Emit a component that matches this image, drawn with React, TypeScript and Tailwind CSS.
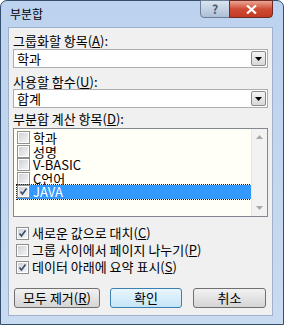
import React from 'react';

const Check = ({ checked }: { checked?: boolean }) => (
  <span className="flex h-[13px] w-[13px] shrink-0 items-center justify-center border border-[#8e8f8f] bg-white">
    <span className="relative flex h-[9px] w-[9px] items-center justify-center bg-gradient-to-br from-[#cfd2d6] to-[#f4f4f4]">
      {checked && (
        <svg width="9" height="9" viewBox="0 0 9 9" className="absolute">
          <path d="M1.5 4.5 L3.5 7 L7.5 1.5" fill="none" stroke="#3a4a6a" strokeWidth="1.6" />
        </svg>
      )}
    </span>
  </span>
);

const Combo = ({ value }: { value: string }) => (
  <div className="flex h-[19px] items-center border border-[#abadb3] bg-white pl-[3px] pr-[1px]">
    <span className="flex-1 leading-[14px]">{value}</span>
    <span className="flex h-[15px] w-[15px] items-center justify-center rounded-[2px] border border-[#8a8a8a] bg-gradient-to-b from-[#f4f4f4] to-[#d8d8d8]">
      <svg width="7" height="4" viewBox="0 0 7 4">
        <path d="M0 0 H7 L3.5 4 Z" fill="#000" />
      </svg>
    </span>
  </div>
);

const Btn = ({ children, primary, w }: { children: React.ReactNode; primary?: boolean; w: string }) => (
  <button
    className={
      primary
        ? 'flex h-[20px] items-center justify-center rounded-[3px] border border-[#3c7fb1] bg-gradient-to-b from-[#eaf6fd] to-[#c4e5f6] leading-[14px] ' + w
        : 'flex h-[20px] items-center justify-center rounded-[3px] border border-[#707070] bg-gradient-to-b from-[#f2f2f2] to-[#d5d5d5] leading-[14px] ' + w
    }
  >
    {children}
  </button>
);

export default function App() {
  const items = ['학과', '성명', 'V-BASIC', 'C언어', 'JAVA'];
  return (
    <div className="flex h-[325px] w-[284px] flex-col rounded-t-[7px] border border-[#34506e] bg-gradient-to-b from-[#bcd2ee] to-[#c9dbf1] pb-[8px] pl-[7px] pr-[10px] font-['Noto_Sans_CJK_KR',sans-serif] text-[13px] text-black">
      <div className="flex h-[26px] items-start justify-between">
        <span className="ml-[2px] mt-[6px] text-[12px] leading-[14px]">부분합</span>
        <div className="-mt-px flex">
          <span className="flex h-[18px] w-[30px] items-center justify-center rounded-bl-[4px] border border-[#6d7f98] bg-gradient-to-b from-[#d9e4f1] to-[#aebfd6] text-[12px] font-bold leading-none text-[#4a5a70]">
            ?
          </span>
          <span className="-ml-px flex h-[18px] w-[44px] items-center justify-center rounded-br-[4px] border border-[#6e2a24] bg-gradient-to-b from-[#e8a493] via-[#cf4b35] to-[#c23a23]">
            <svg width="11" height="9" viewBox="0 0 11 9">
              <path d="M1 0.5 L10 8.5 M10 0.5 L1 8.5" stroke="#fff" strokeWidth="2.2" />
            </svg>
          </span>
        </div>
      </div>

      <div className="flex flex-1 flex-col border border-[#9fb2c9] bg-[#f0f0f0] px-[4px]">
        <div className="mt-[6px] leading-[14px]">
          그룹화할 항목(<span className="underline">A</span>):
        </div>
        <div className="mt-[1px]">
          <Combo value="학과" />
        </div>
        <div className="mt-[7px] leading-[14px]">
          사용할 함수(<span className="underline">U</span>):
        </div>
        <Combo value="합계" />
        <div className="mt-[4px] leading-[14px]">
          부분합 계산 항목(<span className="underline">D</span>):
        </div>
        <div className="mt-[2px] flex h-[89px] border border-[#828790] bg-[#fffff8]">
          <div className="flex flex-1 flex-col pl-[3px] pt-[2px]">
            {items.map((it, i) => (
              <div
                key={it}
                className={
                  i === 4
                    ? 'flex h-[13.5px] items-center gap-[3px] bg-[#3399ff] text-white outline-1 outline-dotted outline-[#222]'
                    : 'flex h-[13.5px] items-center gap-[3px]'
                }
              >
                <Check checked={i === 4} />
                <span className="leading-[13px]">{it}</span>
              </div>
            ))}
          </div>
          <div className="flex w-[16px] flex-col items-center justify-between border-l border-[#e6e6e6] bg-[#f2f2f2] py-[6px]">
            <svg width="7" height="4" viewBox="0 0 7 4">
              <path d="M0 4 H7 L3.5 0 Z" fill="#a9a9a9" />
            </svg>
            <svg width="7" height="4" viewBox="0 0 7 4">
              <path d="M0 0 H7 L3.5 4 Z" fill="#a9a9a9" />
            </svg>
          </div>
        </div>

        <div className="mt-[9px] flex flex-col gap-[3px] pl-[3px]">
          <label className="flex h-[14px] items-center gap-[3px]">
            <Check checked />
            <span className="leading-[14px]">
              새로운 값으로 대치(<span className="underline">C</span>)
            </span>
          </label>
          <label className="flex h-[14px] items-center gap-[3px]">
            <Check />
            <span className="leading-[14px]">
              그룹 사이에서 페이지 나누기(<span className="underline">P</span>)
            </span>
          </label>
          <label className="flex h-[14px] items-center gap-[3px]">
            <Check checked />
            <span className="leading-[14px]">
              데이터 아래에 요약 표시(<span className="underline">S</span>)
            </span>
          </label>
        </div>

        <div className="mt-[14px] flex pl-[1px]">
          <Btn w="w-[86px]">
            <span>
              모두 제거(<span className="underline">R</span>)
            </span>
          </Btn>
          <div className="ml-[10px]">
            <Btn primary w="w-[72px]">
              확인
            </Btn>
          </div>
          <div className="ml-[11px]">
            <Btn w="w-[73px]">취소</Btn>
          </div>
        </div>
      </div>
    </div>
  );
}
